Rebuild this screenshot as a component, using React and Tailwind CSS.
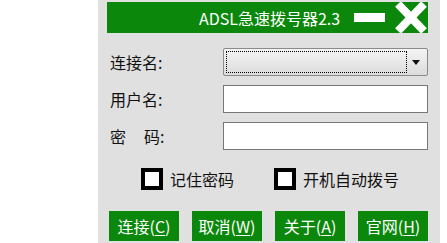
import React from 'react';

const font = { fontFamily: '"Microsoft YaHei", "Noto Sans CJK SC", sans-serif' };

const Field = ({ label, children }) => (
  <div className="flex items-center h-[28px]">
    <div className="w-[116px] pl-[3px] text-[16px] text-[#111]">{label}</div>
    {children}
  </div>
);

const Check = ({ text }) => (
  <div className="flex items-center gap-[7px]">
    <span className="w-[22px] h-[22px] border-[4px] border-black bg-white" />
    <span className="text-[16px] text-[#111]">{text}</span>
  </div>
);

const buttons = [
  { name: '连接', key: 'C' },
  { name: '取消', key: 'W' },
  { name: '关于', key: 'A' },
  { name: '官网', key: 'H' },
];

export default function App() {
  return (
    <div className="w-[447px] h-[243px] bg-white overflow-hidden" style={font}>
      <div className="ml-[98px] w-[342px] h-[243px] bg-[#e0e0e0] pt-[2px] pl-[9px] pr-[12px] flex flex-col">
        {/* title bar */}
        <div className="h-[31px] bg-[#0b880b] flex items-center text-white">
          <span className="ml-[92px] w-[146px] shrink-0 whitespace-nowrap text-[16px] leading-none">
            ADSL急速拨号器2.3
          </span>
          <span className="ml-[9px] shrink-0 w-[31px] h-[9px] bg-white" />
          <svg className="ml-[10px] shrink-0" width="32" height="31" viewBox="0 0 32 31">
            <path d="M3 2 L29 29 M29 2 L3 29" stroke="#fff" strokeWidth="8" />
          </svg>
        </div>

        <div className="mt-[15px] flex flex-col gap-[9px]">
          <Field label="连接名:">
            <div className="flex-1 h-[28px] border border-[#8a8a8a] rounded-[2px] bg-gradient-to-b from-[#f4f4f4] to-[#dcdcdc] p-[2px] flex">
              <div className="flex-1 border border-dotted border-black" />
              <div className="w-[18px] flex items-center justify-center">
                <svg width="8" height="5" viewBox="0 0 8 5">
                  <path d="M0 0 H8 L4 5 Z" fill="#111" />
                </svg>
              </div>
            </div>
          </Field>
          <Field label="用户名:">
            <div className="flex-1 h-[28px] border border-[#777] bg-white" />
          </Field>
          <Field label={<span>密<span className="ml-[18px]">码:</span></span>}>
            <div className="flex-1 h-[28px] border border-[#777] bg-white" />
          </Field>
        </div>

        <div className="mt-[18px] flex items-center h-[22px]">
          <div className="ml-[34px]">
            <Check text="记住密码" />
          </div>
          <div className="ml-[40px]">
            <Check text="开机自动拨号" />
          </div>
        </div>

        <div className="mt-[21px] ml-[2px] flex gap-[13px]">
          {buttons.map((b) => (
            <div
              key={b.key}
              className="w-[70px] h-[30px] bg-[#0b880b] text-white text-[16px] flex items-center justify-center"
            >
              {b.name}(<span className="underline underline-offset-2">{b.key}</span>)
            </div>
          ))}
        </div>
      </div>
    </div>
  );
}
